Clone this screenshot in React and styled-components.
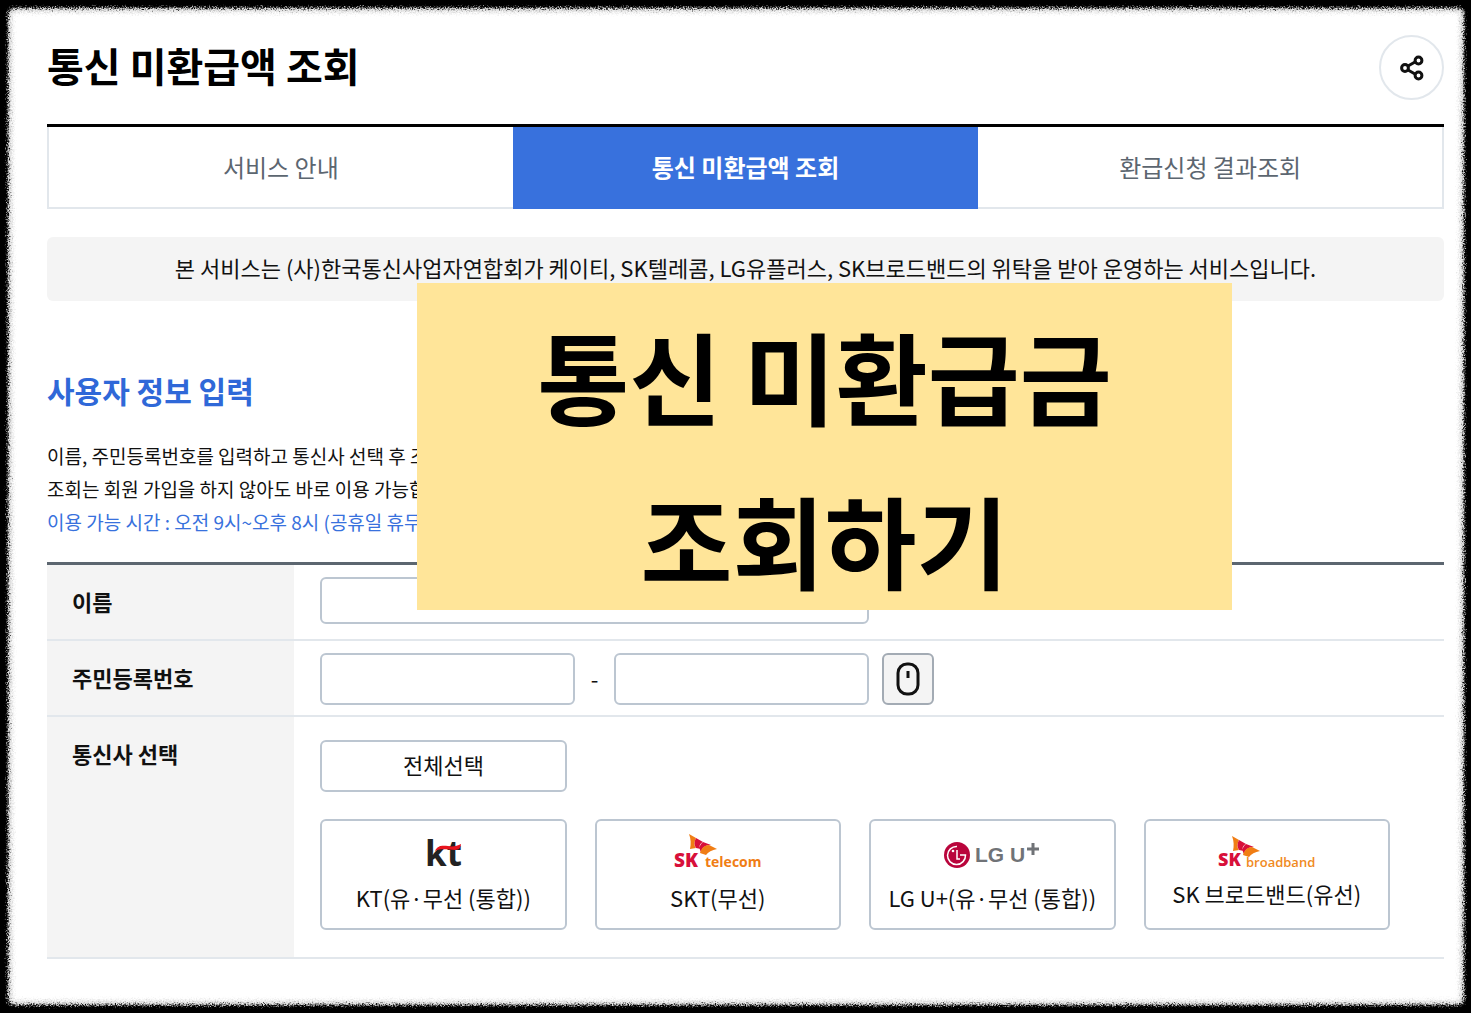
import styled, { createGlobalStyle } from "styled-components";

const palette = {
    blue: "#3871dd",
    text: "#111111",
    sub: "#5c6670",
    line: "#e2e7ec",
    field: "#bcc6d1",
    gray: "#f4f4f4",
    banner: "#ffe599",
};

const GlobalStyle = createGlobalStyle`
    * {
        box-sizing: border-box;
    }
    body {
        margin: 0;
        background: #000;
        color: ${palette.text};
        font-family: "Noto Sans CJK KR", "Noto Sans", sans-serif;
    }
    h1, h2, p {
        margin: 0;
    }
    button, input {
        font: inherit;
        color: inherit;
    }
`;

const PageBlock = styled.div`
    position: relative;
    min-height: 100vh;
    padding: 35px 27px 53px 47px;
`;

// 찢어진 종이 모양 배경
const Paper = styled.div`
    position: absolute;
    inset: 8px 7px 8px 8px;
    z-index: -1;
    border-radius: 6px;
    background: #fff;
    box-shadow: inset 0 0 4px 3px #c8c8c8;
    filter: url(#torn);
`;

const FilterDefs = styled.svg`
    position: absolute;
    width: 0;
    height: 0;
`;

const Header = styled.header`
    display: flex;
    justify-content: space-between;
    align-items: center;
    margin-bottom: 24px;

    h1 {
        padding-bottom: 6px;
        font-size: 40px;
        line-height: 58px;
        font-weight: 700;
        color: #000;
    }
`;

const ShareButton = styled.button`
    display: flex;
    align-items: center;
    justify-content: center;
    width: 65px;
    height: 65px;
    padding: 0;
    border: 2px solid ${palette.line};
    border-radius: 50%;
    background: #fff;
`;

const TabBar = styled.nav`
    display: grid;
    grid-template-columns: repeat(3, 1fr);
    border-top: 3px solid #000;
`;

const Tab = styled.a`
    height: 82px;
    line-height: 80px;
    text-align: center;
    text-decoration: none;
    font-size: 24px;
    font-weight: ${({ $active }) => ($active ? 700 : 400)};
    color: ${({ $active }) => ($active ? "#fff" : palette.sub)};
    background: ${({ $active }) => ($active ? palette.blue : "#fff")};
    border: solid ${({ $active }) => ($active ? palette.blue : palette.line)};
    border-width: 0 0 2px;

    &:first-child {
        border-left-width: 2px;
    }
    &:last-child {
        border-right-width: 2px;
    }
`;

const Notice = styled.p`
    margin-top: 28px;
    padding: 14px 16px 18px;
    border-radius: 6px;
    background: ${palette.gray};
    text-align: center;
    font-size: 22px;
    line-height: 32px;
`;

const Guide = styled.section`
    margin: 67px 0 24px;

    h2 {
        margin-bottom: 27px;
        font-size: 30px;
        line-height: 44px;
        font-weight: 700;
        color: #2f68d8;
    }
    p {
        font-size: 19px;
        line-height: 33px;
    }
    .time {
        color: ${palette.blue};
    }
`;

const Form = styled.form`
    border-top: 3px solid ${palette.sub};
`;

const Row = styled.div`
    display: grid;
    grid-template-columns: 247px 1fr;
    border-bottom: 2px solid ${palette.line};
`;

const RowLabel = styled.div`
    padding: 20px 25px 22px;
    background: ${palette.gray};
    font-size: 22px;
    line-height: 32px;
    font-weight: 700;
`;

const Cell = styled.div`
    display: flex;
    align-items: flex-start;
    padding: 12px 54px 10px 26px;
`;

const CarrierCell = styled(Cell)`
    flex-direction: column;
    align-items: stretch;
    gap: 27px;
    padding: 23px 54px 27px 26px;
`;

const Field = styled.input`
    width: 100%;
    max-width: ${({ $wide }) => ($wide ? "549px" : "255px")};
    height: ${({ $wide }) => ($wide ? "47px" : "52px")};
    padding: 0 14px;
    border: 2px solid ${palette.field};
    border-radius: 6px;
    background: #fff;
    font-size: 22px;
`;

const Dash = styled.span`
    width: 39px;
    text-align: center;
    font-size: 22px;
    line-height: 50px;
`;

const MouseButton = styled.button`
    display: flex;
    align-items: center;
    justify-content: center;
    width: 52px;
    height: 52px;
    margin-left: 13px;
    padding: 0;
    border: 2px solid #a3abb4;
    border-radius: 6px;
    background: ${palette.gray};
`;

const SelectAll = styled.button`
    width: 247px;
    height: 52px;
    padding: 0 0 4px;
    border: 2px solid ${palette.field};
    border-radius: 6px;
    background: #fff;
    font-size: 22px;
`;

const CarrierList = styled.div`
    display: grid;
    grid-template-columns: repeat(4, 1fr);
    gap: 28px;
`;

const CarrierButton = styled.button`
    display: flex;
    flex-direction: column;
    align-items: center;
    gap: 8px;
    height: 111px;
    padding: 12px 0 0;
    border: 2px solid ${palette.field};
    border-radius: 6px;
    background: #fff;
    font-size: 22px;
    line-height: 32px;
    white-space: nowrap;

    svg {
        display: block;
        flex-shrink: 0;
        overflow: visible;
    }
`;

const Banner = styled.div`
    position: absolute;
    top: 283px;
    left: 417px;
    width: 815px;
    padding-top: 10px;
    height: 327px;
    background: ${palette.banner};
    text-align: center;
    font-size: 100px;
    line-height: 164px;
    font-weight: 700;
    color: #000;
`;

const ShareIcon = () => (
    <svg width="26" height="26" viewBox="0 0 26 26" fill="none" stroke="#111" strokeWidth="3">
        <path d="M9 11 L16 7 M9 15 L16 19" />
        <circle cx="6" cy="13" r="3.4" />
        <circle cx="19.5" cy="5.5" r="3.4" />
        <circle cx="19.5" cy="20.5" r="3.4" />
    </svg>
);

const MouseIcon = () => (
    <svg width="24" height="34" viewBox="0 0 24 34" fill="none" stroke="#111" strokeWidth="3">
        <rect x="2" y="2" width="20" height="30" rx="9" />
        <path d="M12 9 V16" />
    </svg>
);

const KtLogo = () => (
    <svg width="40" height="40" viewBox="0 0 40 40">
        <text x="2" y="33" fontFamily="Open Sans" fontWeight="700" fontSize="35" fill="#222">kt</text>
        <path d="M12 18 C14 13 18 12 25 13 C30 14 34 13 38 11 C38 14 36 17 32 17 C26 17 18 15 12 18Z" fill="#e8141e" />
    </svg>
);

const Wings = ({ x, y }) => (
    <g transform={`translate(${x} ${y})`}>
        <path d="M0 0 L7 4 C5 8 5 12 7 14 L1 15 C2 10 2 5 0 0Z" fill="#f07d14" />
        <path d="M7 4 L14 8 C10 10 10 13 12 15 L7 14 C5 11 5 8 7 4Z" fill="#d8103a" />
        <path d="M14 8 L22 11 C16 11 13 14 12 18 C10 15 10 11 14 8Z" fill="#d8103a" />
        <path d="M20 11 L28 15 C23 16 19 18 17 21 L11 19 C12 15 15 11 20 11Z" fill="#f07d14" />
    </g>
);

const SktLogo = () => (
    <svg width="88" height="40" viewBox="0 0 88 40">
        <text x="0" y="34" fontFamily="Open Sans" fontWeight="800" fontSize="19" fill="#d8103a">SK</text>
        <Wings x={15} y={1} />
        <text x="31" y="34" fontFamily="Open Sans" fontWeight="700" fontSize="14" fill="#f07d14">telecom</text>
    </svg>
);

const LgLogo = () => (
    <svg width="96" height="40" viewBox="0 0 96 40">
        <circle cx="13" cy="22" r="13" fill="#b9053c" />
        <path d="M13 13.500 A9 9 0 1 0 21.500 22 H16" fill="none" stroke="#fff" strokeWidth="1.500" />
        <path d="M13 17 V26 H16" fill="none" stroke="#fff" strokeWidth="1.500" />
        <circle cx="9" cy="18" r="1.300" fill="#fff" />
        <text x="31" y="29" fontFamily="Liberation Sans" fontWeight="700" fontSize="21" fill="#707377">LG</text>
        <text x="66" y="29" fontFamily="Liberation Sans" fontWeight="700" fontSize="21" fill="#707377">U</text>
        <path d="M89 10 V22 M83 16 H95" stroke="#707377" strokeWidth="3" />
    </svg>
);

const SkbLogo = () => (
    <svg width="98" height="36" viewBox="0 0 98 36">
        <text x="0" y="33" fontFamily="Open Sans" fontWeight="800" fontSize="18" fill="#d8103a">SK</text>
        <Wings x={14} y={3} />
        <text x="28" y="34" fontFamily="Open Sans" fontWeight="600" fontSize="13" fill="#f08a1e">broadband</text>
    </svg>
);

const tabs = ["서비스 안내", "통신 미환급액 조회", "환급신청 결과조회"];

const carriers = [
    { name: "KT(유·무선 (통합))", Logo: KtLogo },
    { name: "SKT(무선)", Logo: SktLogo },
    { name: "LG U+(유·무선 (통합))", Logo: LgLogo },
    { name: "SK 브로드밴드(유선)", Logo: SkbLogo },
];

const App = () => {
    return (
        <PageBlock>
            <GlobalStyle />
            <FilterDefs aria-hidden="true">
                <filter id="torn" x="-2%" y="-2%" width="104%" height="104%">
                    <feTurbulence type="fractalNoise" baseFrequency="0.7" numOctaves="2" seed="4" result="noise" />
                    <feGaussianBlur in="SourceGraphic" stdDeviation="1" result="soft" />
                    <feDisplacementMap in="soft" in2="noise" scale="9" xChannelSelector="R" yChannelSelector="G" />
                </filter>
            </FilterDefs>
            <Paper />
            <Header>
                <h1>통신 미환급액 조회</h1>
                <ShareButton type="button" aria-label="공유"><ShareIcon /></ShareButton>
            </Header>
            <TabBar>
                {tabs.map((tab, i) => (
                    <Tab key={tab} href="#" $active={i === 1}>{tab}</Tab>
                ))}
            </TabBar>
            <Notice>
                본 서비스는 (사)한국통신사업자연합회가 케이티, SK텔레콤, LG유플러스, SK브로드밴드의 위탁을 받아 운영하는 서비스입니다.
            </Notice>
            <Guide>
                <h2>사용자 정보 입력</h2>
                <p>이름, 주민등록번호를 입력하고 통신사 선택 후 조회</p>
                <p>조회는 회원 가입을 하지 않아도 바로 이용 가능합니다.</p>
                <p className="time">이용 가능 시간 : 오전 9시~오후 8시 (공휴일 휴무)</p>
            </Guide>
            <Form>
                <Row>
                    <RowLabel><label htmlFor="name">이름</label></RowLabel>
                    <Cell><Field id="name" type="text" $wide /></Cell>
                </Row>
                <Row>
                    <RowLabel><label htmlFor="rrn1">주민등록번호</label></RowLabel>
                    <Cell>
                        <Field id="rrn1" type="text" maxLength="6" />
                        <Dash>-</Dash>
                        <Field id="rrn2" type="password" maxLength="7" aria-label="주민등록번호 뒷자리" />
                        <MouseButton type="button" aria-label="마우스 입력"><MouseIcon /></MouseButton>
                    </Cell>
                </Row>
                <Row>
                    <RowLabel>통신사 선택</RowLabel>
                    <CarrierCell>
                        <SelectAll type="button">전체선택</SelectAll>
                        <CarrierList>
                            {carriers.map(({ name, Logo }) => (
                                <CarrierButton key={name} type="button">
                                    <Logo />
                                    <span>{name}</span>
                                </CarrierButton>
                            ))}
                        </CarrierList>
                    </CarrierCell>
                </Row>
            </Form>
            <Banner>
                <div>통신 미환급금</div>
                <div>조회하기</div>
            </Banner>
        </PageBlock>
    );
};

export default App;
